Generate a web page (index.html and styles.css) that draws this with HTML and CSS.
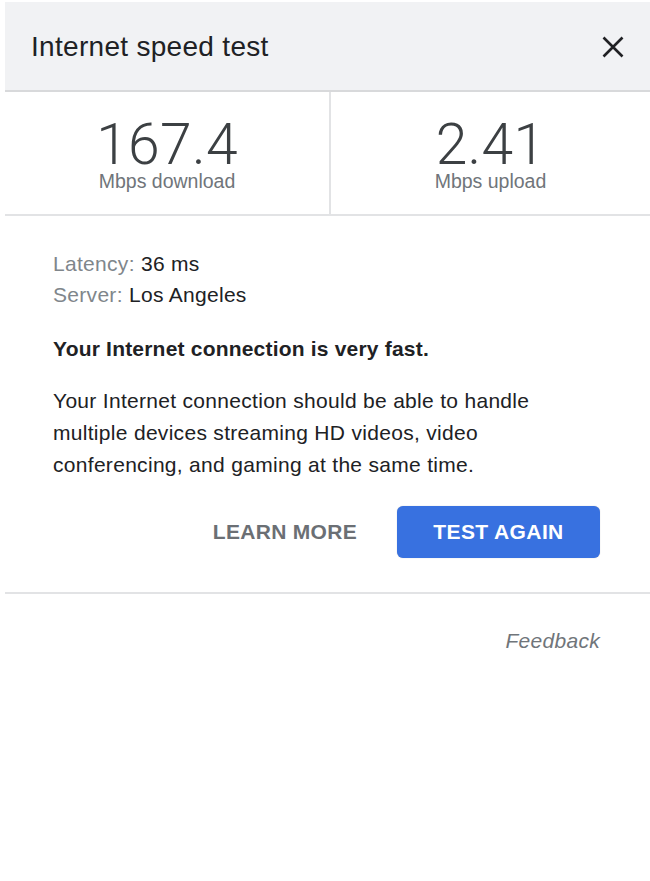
FILE: index.html
```html
<!DOCTYPE html>
<html>
<head>
<meta charset="utf-8">
<link rel="stylesheet" href="styles.css">
</head>
<body>
<div class="card">
  <div class="header">
    <div class="title">Internet speed test</div>
    <svg class="close" width="22" height="22" viewBox="0 0 22 22"><path d="M1.5 1.5 L20.5 20.5 M20.5 1.5 L1.5 20.5" stroke="#202124" stroke-width="2.6" fill="none"/></svg>
  </div>
  <div class="stats">
    <div class="stat">
      <div class="num">167.4</div>
      <div class="unit">Mbps download</div>
    </div>
    <div class="stat stat-right">
      <div class="num">2.41</div>
      <div class="unit">Mbps upload</div>
    </div>
  </div>
  <div class="body">
    <div class="meta"><span class="lbl">Latency:</span> 36 ms</div>
    <div class="meta"><span class="lbl">Server:</span> Los Angeles</div>
    <div class="verdict">Your Internet connection is very fast.</div>
    <p class="desc">Your Internet connection should be able to handle multiple devices streaming HD videos, video conferencing, and gaming at the same time.</p>
    <div class="actions">
      <span class="learn">LEARN MORE</span>
      <span class="again">TEST AGAIN</span>
    </div>
  </div>
  <div class="foot">
    <span class="feedback">Feedback</span>
  </div>
</div>
</body>
</html>
```
FILE: styles.css
```css
html, body {
  margin: 0;
  padding: 0;
  background: #ffffff;
}
body {
  font-family: "Liberation Sans", Arial, sans-serif;
  color: #202124;
}
.card {
  margin: 2px 0 0 5px;
}
.header {
  height: 88px;
  background: #f1f2f4;
  border-bottom: 2px solid #d8d9db;
  display: flex;
  align-items: center;
  justify-content: space-between;
  padding: 0 26px 0 26px;
}
.title {
  font-size: 28px;
  letter-spacing: 0.3px;
  color: #202124;
  margin-top: 2px;
}
.close {
  display: block;
  margin-top: 1px;
}
.stats {
  display: grid;
  grid-template-columns: 324px 1fr;
  height: 122px;
  border-bottom: 2px solid #e2e3e5;
}
.stat {
  display: flex;
  flex-direction: column;
  align-items: center;
  padding-top: 28px;
}
.stat-right {
  border-left: 2px solid #e2e3e5;
}
.num {
  font-family: Roboto, "Liberation Sans", sans-serif;
  font-weight: 300;
  font-size: 57px;
  line-height: 50px;
  color: #3c4043;
  letter-spacing: 0.3px;
}
.unit {
  font-size: 19.5px;
  color: #70757a;
  line-height: 22px;
  margin-top: 0;
}
.body {
  padding: 32px 50px 34px 48px;
  border-bottom: 2px solid #e2e3e5;
}
.meta {
  font-size: 21px;
  letter-spacing: 0.3px;
  line-height: 31px;
  color: #202124;
}
.lbl {
  color: #80868b;
}
.verdict {
  font-size: 21px;
  letter-spacing: 0.2px;
  font-weight: bold;
  line-height: 31px;
  margin-top: 23px;
}
.desc {
  font-size: 21px;
  letter-spacing: 0.3px;
  line-height: 32px;
  margin: 21px 0 0 0;
}
.actions {
  display: flex;
  justify-content: flex-end;
  align-items: center;
  gap: 40px;
  margin-top: 25px;
}
.learn {
  font-size: 21px;
  font-weight: bold;
  color: #6b6f74;
  letter-spacing: 0.3px;
}
.again {
  display: flex;
  align-items: center;
  justify-content: center;
  width: 203px;
  height: 52px;
  box-sizing: border-box;
  background: #3871e0;
  border-radius: 6px;
  color: #ffffff;
  font-size: 21px;
  font-weight: bold;
  letter-spacing: 0.4px;
  box-shadow: 0 0 1px rgba(0,0,0,0.3);
}
.foot {
  display: flex;
  justify-content: flex-end;
  padding: 35px 50px 0 0;
}
.feedback {
  font-size: 21px;
  letter-spacing: 0.3px;
  font-style: italic;
  color: #70757a;
}
```
